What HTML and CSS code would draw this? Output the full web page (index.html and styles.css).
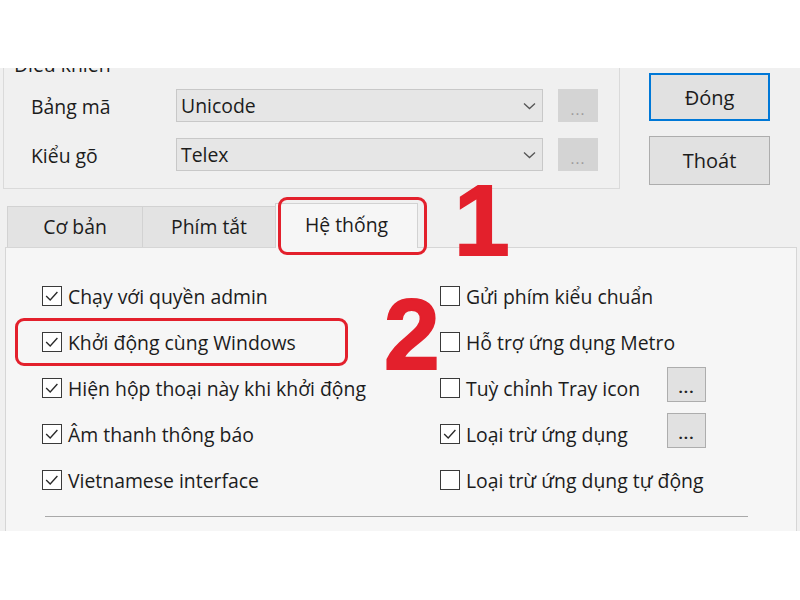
FILE: index.html
```html
<!DOCTYPE html>
<html lang="vi">
<head>
<meta charset="utf-8">
<title>Cài đặt</title>
<link rel="stylesheet" href="styles.css">
</head>
<body>
<div class="window">
  <div class="top">
    <fieldset class="group">
      <legend>Điều khiển</legend>
      <div class="field-row">
        <span class="field-label">Bảng mã</span>
        <div class="combo"><span>Unicode</span><svg class="chev" width="13" height="8" viewBox="0 0 13 8"><path d="M1 1.5 L6.5 6.5 L12 1.5" fill="none" stroke="#555" stroke-width="1.3"/></svg></div>
        <button class="dots-off">...</button>
      </div>
      <div class="field-row">
        <span class="field-label">Kiểu gõ</span>
        <div class="combo"><span>Telex</span><svg class="chev" width="13" height="8" viewBox="0 0 13 8"><path d="M1 1.5 L6.5 6.5 L12 1.5" fill="none" stroke="#555" stroke-width="1.3"/></svg></div>
        <button class="dots-off">...</button>
      </div>
    </fieldset>
    <div class="actions">
      <button class="btn primary">Đóng</button>
      <button class="btn">Thoát</button>
    </div>
  </div>

  <div class="tabs">
    <div class="tab tab-1">Cơ bản</div>
    <div class="tab tab-2">Phím tắt</div>
    <div class="tab tab-3 active">Hệ thống</div>
  </div>

  <div class="panel">
    <div class="opts">
      <div class="opt"><span class="box on"><svg viewBox="0 0 20 20"><path d="M3.5 10 L8 14.5 L16 5.5"/></svg></span><span class="txt">Chạy với quyền admin</span></div>
      <div class="opt"><span class="box on"><svg viewBox="0 0 20 20"><path d="M3.5 10 L8 14.5 L16 5.5"/></svg></span><span class="txt">Khởi động cùng Windows</span></div>
      <div class="opt"><span class="box on"><svg viewBox="0 0 20 20"><path d="M3.5 10 L8 14.5 L16 5.5"/></svg></span><span class="txt">Hiện hộp thoại này khi khởi động</span></div>
      <div class="opt"><span class="box on"><svg viewBox="0 0 20 20"><path d="M3.5 10 L8 14.5 L16 5.5"/></svg></span><span class="txt">Âm thanh thông báo</span></div>
      <div class="opt"><span class="box on"><svg viewBox="0 0 20 20"><path d="M3.5 10 L8 14.5 L16 5.5"/></svg></span><span class="txt">Vietnamese interface</span></div>

      <div class="opt"><span class="box"></span><span class="txt">Gửi phím kiểu chuẩn</span></div>
      <div class="opt"><span class="box"></span><span class="txt">Hỗ trợ ứng dụng Metro</span></div>
      <div class="opt"><span class="box"></span><span class="txt fixed">Tuỳ chỉnh Tray icon</span><button class="more">...</button></div>
      <div class="opt"><span class="box on"><svg viewBox="0 0 20 20"><path d="M3.5 10 L8 14.5 L16 5.5"/></svg></span><span class="txt fixed">Loại trừ ứng dụng</span><button class="more">...</button></div>
      <div class="opt"><span class="box"></span><span class="txt">Loại trừ ứng dụng tự động</span></div>
    </div>
    <div class="sep"></div>
  </div>

  <div class="mark mark-tab"></div>
  <div class="mark mark-row"></div>
  <div class="num num-1">1</div>
  <div class="num num-2">2</div>
</div>
</body>
</html>
```

FILE: styles.css
```css
* { box-sizing: border-box; }
html, body { margin: 0; padding: 0; background: #ffffff; }
body {
  font-family: "Open Sans", "Noto Sans", "DejaVu Sans", sans-serif;
  color: #1c1c1c;
}

.window {
  position: relative;
  width: 800px;
  height: 463px;
  margin-top: 68px;
  background: #f0f0f0;
  overflow: hidden;
  font-size: 19.4px;
}

/* top area */
.top { display: flex; align-items: flex-start; }

.group {
  margin: -15px 0 0 3px;
  padding: 12px 21px 17px 8px;
  width: 617px;
  min-width: 0;
  border: 1px solid #dadada;
}
.group legend {
  padding: 0 2px;
  font-size: 19.4px;
  line-height: 24px;
}

.field-row {
  display: flex;
  align-items: center;
  margin-left: 19px;
}
.field-row + .field-row { margin-top: 16px; }
.field-label { width: 145px; padding-top: 2px; }

.combo {
  width: 367px;
  height: 33px;
  border: 1px solid #c8c8c8;
  background: #e6e6e6;
  display: flex;
  align-items: center;
  justify-content: space-between;
  padding: 0 6px 0 4px;
}

.dots-off {
  width: 40px;
  height: 33px;
  margin-left: 15px;
  border: none;
  background: #d4d4d4;
  color: #9a9a9a;
  font-family: inherit;
  font-size: 15px;
  padding: 6px 0 0;
  letter-spacing: 1px;
}

.actions {
  display: flex;
  flex-direction: column;
  gap: 15px;
  margin: 5px 0 0 29px;
}
.btn {
  width: 121px;
  height: 48px;
  background: #e1e1e1;
  border: 1px solid #adadad;
  font-family: inherit;
  font-size: 20px;
  color: #1c1c1c;
  padding: 0;
}
.btn + .btn { height: 49px; }
.btn.primary { border: 2px solid #0078d7; }

/* tabs */
.tabs {
  display: flex;
  align-items: flex-end;
  margin: 14px 0 0 7px;
}
.tab {
  height: 41px;
  border: 1px solid #d2d2d2;
  border-bottom: none;
  background: #e3e3e3;
  display: flex;
  align-items: center;
  justify-content: center;
  margin-left: -1px;
  padding-bottom: 1px;
}
.tab-1 { width: 136px; margin-left: 0; }
.tab-2 { width: 134px; }
.tab-3 { width: 143px; }
.tab.active {
  position: relative;
  z-index: 1;
  height: 45px;
  margin-bottom: -1px;
  background: #f6f6f6;
  padding-bottom: 3px;
}

/* panel */
.panel {
  margin-left: 5px;
  width: 792px;
  height: 320px;
  border: 1px solid #d6d6d6;
  border-bottom: none;
  background: #f6f6f6;
  padding: 25px 0 0 36px;
}
.opts {
  display: grid;
  grid-template-columns: 398px 1fr;
  grid-template-rows: repeat(5, 46px);
  grid-auto-flow: column;
}
.opt {
  display: flex;
  align-items: center;
  gap: 6px;
}
.box {
  flex: none;
  width: 20px;
  height: 20px;
  border: 1px solid #3a3a3a;
  background: #ffffff;
  display: block;
}
.box svg {
  display: block;
  width: 18px;
  height: 18px;
}
.box svg path {
  fill: none;
  stroke: #2a2a2a;
  stroke-width: 1.5;
}
.txt { white-space: nowrap; }
.txt.fixed { width: 195px; }

.more {
  flex: none;
  width: 39px;
  height: 35px;
  margin-bottom: 7px;
  background: #e1e1e1;
  border: 1px solid #adadad;
  color: #222;
  font-family: inherit;
  font-size: 15px;
  font-weight: 700;
  padding: 4px 0 0;
  letter-spacing: 1px;
}

.sep {
  width: 703px;
  height: 1px;
  margin: 13px 0 0 3px;
  background: #a9a9a9;
}

/* annotations */
.mark {
  position: absolute;
  border: 3px solid #e3202c;
  border-radius: 9px;
  z-index: 2;
}
.mark-tab { left: 278px; top: 129px; width: 149px; height: 58px; }
.mark-row { left: 15px; top: 250px; width: 333px; height: 48px; }

.num {
  position: absolute;
  z-index: 3;
  font-family: "Liberation Sans", Arial, sans-serif;
  font-weight: 700;
  font-size: 100px;
  line-height: 100px;
  color: #e3202c;
  -webkit-text-stroke: 2px #e3202c;
}
.num-1 { left: 454px; top: 102px; }
.num-2 { left: 384px; top: 216px; }
```
